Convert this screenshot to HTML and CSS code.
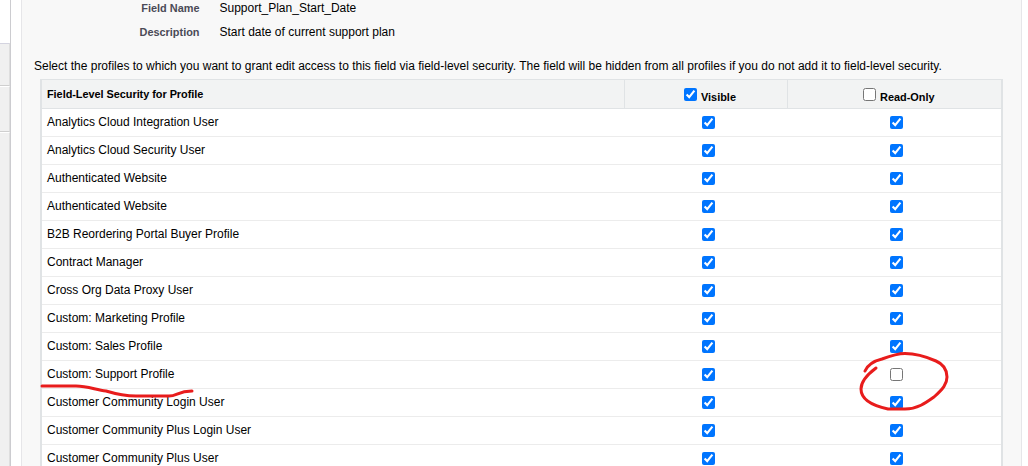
FILE: index.html
```html
<!DOCTYPE html>
<html lang="en">
<head>
<meta charset="utf-8">
<title>Field-Level Security</title>
<link rel="stylesheet" href="styles.css">
</head>
<body>
<div class="page">
  <nav class="sidebar"><div class="blank"></div><div class="item first"></div><div class="item"></div><div class="item last"></div></nav>
  <main class="panel">
    <dl class="details">
      <dt>Field Name</dt><dd>Support_Plan_Start_Date</dd>
      <dt>Description</dt><dd class="desc">Start date of current support plan</dd>
    </dl>
    <p class="intro"><span>Select the profiles to which you want to grant edit access to this field via field-level security. The field will be hidden from all profiles if you do not add it to field-level security.</span></p>
    <div class="grid">
      <div class="row head"><b>Field-Level Security for Profile</b><label><input type="checkbox" checked><span>Visible</span></label><label><input type="checkbox"><span>Read-Only</span></label></div>
      <div class="row"><span>Analytics Cloud Integration User</span><input type="checkbox" checked><input type="checkbox" checked></div>
      <div class="row"><span>Analytics Cloud Security User</span><input type="checkbox" checked><input type="checkbox" checked></div>
      <div class="row"><span>Authenticated Website</span><input type="checkbox" checked><input type="checkbox" checked></div>
      <div class="row"><span>Authenticated Website</span><input type="checkbox" checked><input type="checkbox" checked></div>
      <div class="row"><span>B2B Reordering Portal Buyer Profile</span><input type="checkbox" checked><input type="checkbox" checked></div>
      <div class="row"><span>Contract Manager</span><input type="checkbox" checked><input type="checkbox" checked></div>
      <div class="row"><span>Cross Org Data Proxy User</span><input type="checkbox" checked><input type="checkbox" checked></div>
      <div class="row"><span>Custom: Marketing Profile</span><input type="checkbox" checked><input type="checkbox" checked></div>
      <div class="row"><span>Custom: Sales Profile</span><input type="checkbox" checked><input type="checkbox" checked></div>
      <div class="row"><span>Custom: Support Profile</span><input type="checkbox" checked><input type="checkbox"></div>
      <div class="row"><span>Customer Community Login User</span><input type="checkbox" checked><input type="checkbox" checked></div>
      <div class="row"><span>Customer Community Plus Login User</span><input type="checkbox" checked><input type="checkbox" checked></div>
      <div class="row"><span>Customer Community Plus User</span><input type="checkbox" checked><input type="checkbox" checked></div>
    </div>
  </main>
  <svg class="ink" viewBox="0 0 1028 466">
    <path d="M42 386 H76 C88 386 96 390 106 391 C116 394 124 396 136 396 H169 C177 396 178 391 192 391"/>
    <path d="M876 368 C868 374 861 382 861 389 C861 401 874 406 888 409 H905 C918 409 927 402 934 397 C943 389 947 384 947 377 C947 369 943 364 936 361 C927 357 918 353.500 905 353.500 C898 353.500 890 356 882 359 C874 361 868 364 865 371"/>
  </svg>
</div>
</body>
</html>
```
FILE: styles.css
```css
* { box-sizing: border-box; }
body { margin: 0; background: #fff; color: #000; font: 12px/14px "Liberation Sans", Arial, sans-serif; }
.page { position: relative; display: flex; width: 1028px; height: 466px; overflow: hidden; }
.sidebar { width: 11px; flex: none; border-right: 1px solid #ccccd0; }
.blank { height: 43px; }
.item { height: 46px; background: #f0f0f0; border-top: 1px solid #fff; border-bottom: 1px solid #cfcfcf; border-right: 1px solid #dedede; }
.first { height: 43px; border-top-color: #d4d4e0; }
.last { height: 340px; }
.panel { width: 1001px; flex: none; margin-left: 10px; height: 466px; overflow: hidden; background: #f8f8f8; border: solid #e6e6e9; border-width: 0 1px; }
.details { display: grid; grid-template-columns: 177.5px 1fr; row-gap: 10px; column-gap: 20px; margin: 0; padding-top: 1px; }
.details dt { font-weight: bold; font-size: 10.92px; text-align: right; color: #4a4a56; }
.details dd { margin: 0; }
.intro { margin: 20px 0 6px 12px; white-space: nowrap; }
.grid { width: 963px; margin-left: 18px; border: 2px solid #e0e3e5; border-top-width: 1px; background: #fff; }
.row { display: grid; grid-template-columns: 582px 163px 214px; height: 28px; border-bottom: 1px solid #ececec; }
.row > * { align-self: center; }
.row > span, .row > b { padding-left: 5px; white-space: nowrap; }
.row > span { position: relative; top: -1px; }
.row > input { justify-self: center; }
.row > input:nth-child(2) { margin-left: 6px; }
.row > input:nth-child(3) { margin-left: 5px; }
input { width: 13px; height: 13px; margin: 0; flex: none; }
.head { height: 29px; background: #f2f3f3; border-color: #e0e3e5; font-size: 10.92px; font-weight: bold; }
.head b { letter-spacing: -.04px; }
.row > label { align-self: stretch; display: flex; gap: 4px; padding: 8px 0 0 59px; border-left: 1px solid #e0e3e5; }
.row > label:last-child { padding-left: 75px; }
.row > label span { padding-top: 2px; }
.ink { position: absolute; inset: 0; width: 1028px; height: 466px; fill: none; stroke: #e81c1c; stroke-width: 3; stroke-linecap: round; stroke-linejoin: round; pointer-events: none; }
```
